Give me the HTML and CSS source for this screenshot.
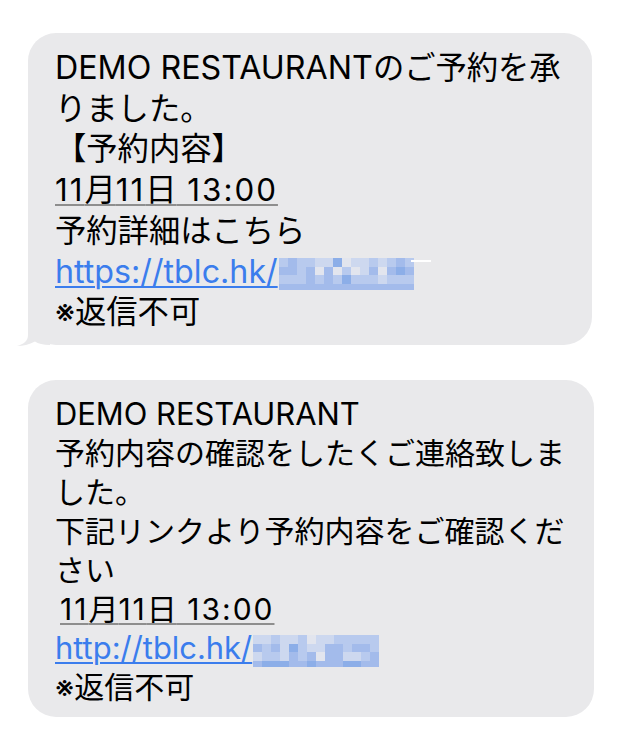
FILE: index.html
```html
<!DOCTYPE html>
<html lang="ja">
<head>
    <meta charset="UTF-8">
    <meta name="viewport" content="width=device-width, initial-scale=1.0">
    <title>Messages</title>
    <link rel="stylesheet" href="styles.css">
</head>
<body>
    <div class="thread">
        <div class="bubble bubble-first">
            <p class="msg"><span class="en">DEMO RESTAURANT</span>のご予約を承<br>りました。<br>【予約内容】<br><span class="date"><span class="en">11</span>月<span class="en">11</span>日<span class="en"> 13:00</span></span><br>予約詳細はこちら<br><a class="link en" href="#">https://tblc.hk/</a><span class="mosaic mosaic-glint" data-pattern="343322512232343|443414131241454|333434353332333|444444444444444"></span><br>※返信不可</p>
            <svg class="tail" width="34" height="31" viewBox="0 0 34 31">
                <path d="M12 0 L12 20 C12 26 8 29 1 31 C7 31 13 29.5 19 26.5 C22 28.5 27 30 34 30 L34 0 Z" fill="#e9e9eb"/>
            </svg>
        </div>

        <div class="bubble bubble-second">
            <p class="msg"><span class="en">DEMO RESTAURANT</span><br>予約内容の確認をしたくご連絡致しま<br>した。<br>下記リンクより予約内容をご確認くだ<br>さい<br><span class="date date-indent"><span class="en">11</span>月<span class="en">11</span>日<span class="en"> 13:00</span></span><br><a class="link en" href="#">http://tblc.hk/</a><span class="mosaic" data-pattern="22322312233333|43425322443443|23324341442234|45554454445544"></span><br>※返信不可</p>
        </div>
    </div>

    <script>
        // blurred link ids
        document.querySelectorAll('.mosaic').forEach(function (el) {
            var rows = el.dataset.pattern.split('|');
            el.style.gridTemplateColumns = 'repeat(' + rows[0].length + ', 9px)';
            rows.forEach(function (row) {
                row.split('').forEach(function (c) {
                    var cell = document.createElement('span');
                    cell.className = 'px' + c;
                    el.appendChild(cell);
                });
            });
        });
    </script>
</body>
</html>
```

FILE: styles.css
```css
body {
    margin: 0;
    background-color: #ffffff;
    font-family: Inter, "Noto Sans CJK JP", sans-serif;
}

.thread {
    display: flex;
    flex-direction: column;
    gap: 35px;
    width: 566px;
    padding: 33px 0 0 28px;
}

.bubble {
    position: relative;
    background-color: #e9e9eb;
    border-radius: 28px;
    padding: 15px 20px 12px 27px;
}

.bubble-first {
    margin-right: 2px;
}

.bubble-second {
    padding-bottom: 10px;
}

.msg {
    margin: 0;
    font-size: 30px;
    line-height: 39px;
    color: #000000;
    white-space: nowrap;
}

.bubble-first .msg {
    font-size: 31.3px;
    line-height: 40.7px;
}

.en {
    font-size: 1.03em;
    line-height: 1;
}

.date {
    text-decoration: underline;
    text-decoration-color: #8e8e8e;
    text-decoration-thickness: 2px;
    text-underline-offset: 3px;
}

.date .en {
    font-size: 1em;
    letter-spacing: 2px;
}

.date-indent {
    margin-left: 5px;
}

.link {
    color: #3b7ded;
    text-decoration: underline;
    text-decoration-thickness: 2px;
    text-underline-offset: 3px;
}

.mosaic {
    position: relative;
    display: inline-grid;
    grid-template-rows: 9px 8px 9px 6px;
    vertical-align: middle;
    margin-left: 1px;
}

.mosaic-glint::after {
    content: "";
    position: absolute;
    top: 2px;
    left: 132px;
    width: 20px;
    height: 2px;
    background-color: #ffffff;
}

.px1 { background-color: #e2e5ee; }
.px2 { background-color: #cdd8ef; }
.px3 { background-color: #b8caee; }
.px4 { background-color: #a3bbeb; }
.px5 { background-color: #8caee8; }

.tail {
    position: absolute;
    left: -12px;
    bottom: -1px;
}
```
